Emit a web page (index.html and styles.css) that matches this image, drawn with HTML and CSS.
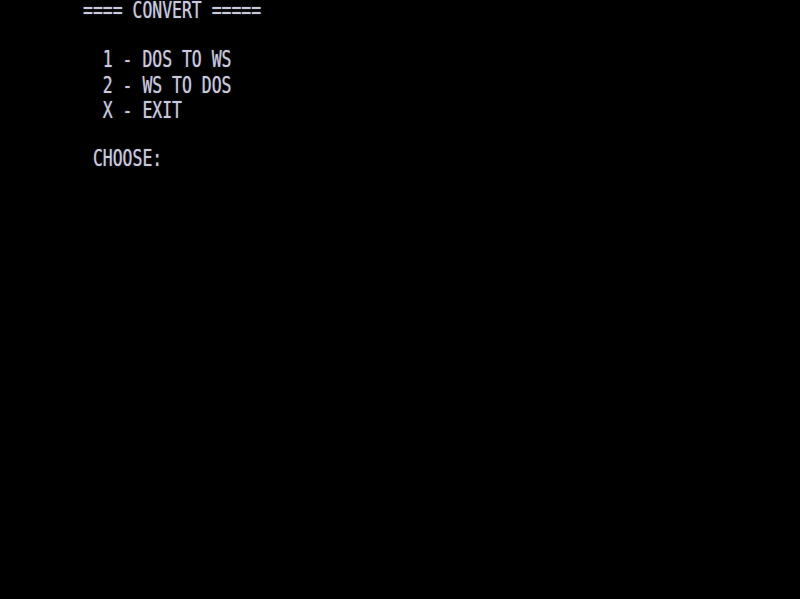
FILE: index.html
```html
<!DOCTYPE html>
<html>
<head>
<meta charset="utf-8">
<link rel="stylesheet" href="styles.css">
</head>
<body>
<div class="screen">
<div class="line">==== CONVERT =====</div>
<div class="line"> </div>
<div class="line">  1 - DOS TO WS</div>
<div class="line">  2 - WS TO DOS</div>
<div class="line">  X - EXIT</div>
<div class="line"> </div>
<div class="line"> CHOOSE:</div>
</div>
</body>
</html>
```
FILE: styles.css
```css
html, body {
  margin: 0;
  padding: 0;
  background: #000;
  width: 800px;
  height: 599px;
  overflow: hidden;
}
.screen {
  padding-left: 83px;
  font-family: "DejaVu Sans Mono", monospace;
  font-size: 16.45px;
  line-height: 17.22px;
  color: #c9c9de;
  transform: translateY(-2px) scaleY(1.44);
  transform-origin: top left;
  text-shadow: 0 0 1px rgba(200, 200, 230, 0.6);
}
.line {
  white-space: pre;
  height: 17.22px;
}
```
